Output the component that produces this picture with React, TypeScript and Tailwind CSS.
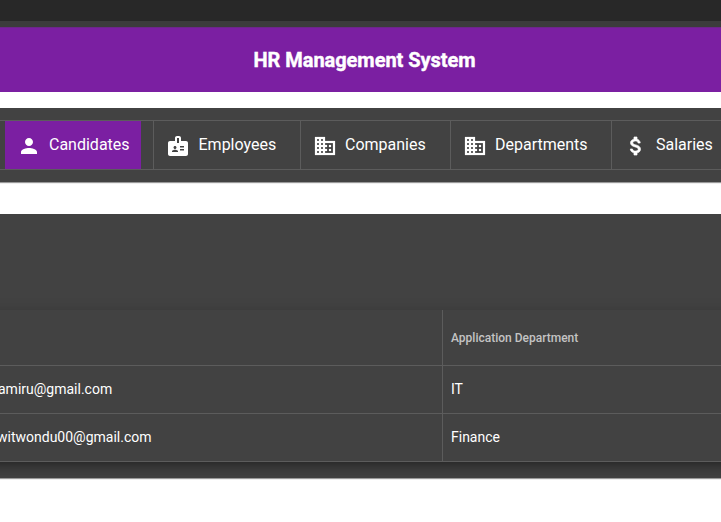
import type { ReactNode } from "react";
import { MdPerson, MdBadge } from "react-icons/md";

function BuildingIcon() {
  return (
    <svg width="24" height="24" viewBox="0 0 24 24" fill="currentColor" stroke="currentColor" strokeWidth="0.2">
      <path d="M12 7V3H2v18h20V7H12zM6 19H4v-2h2v2zm0-4H4v-2h2v2zm0-4H4V9h2v2zm0-4H4V5h2v2zm4 12H8v-2h2v2zm0-4H8v-2h2v2zm0-4H8V9h2v2zm0-4H8V5h2v2zm10 12h-8v-2h2v-2h-2v-2h2v-2h-2V9h8v10zm-2-8h-2v2h2v-2zm0 4h-2v2h2v-2z" />
    </svg>
  );
}

function DollarIcon() {
  return (
    <svg width="24" height="24" viewBox="0 0 24 24" fill="currentColor" stroke="currentColor" strokeWidth="0.7">
      <path d="M11.8 10.9c-2.27-.59-3-1.2-3-2.15 0-1.09 1.01-1.85 2.7-1.85 1.78 0 2.44.85 2.5 2.1h2.21c-.07-1.72-1.12-3.3-3.21-3.81V3h-3v2.16c-1.94.42-3.5 1.68-3.5 3.61 0 2.31 1.91 3.46 4.7 4.13 2.5.6 3 1.48 3 2.41 0 .69-.49 1.79-2.7 1.79-2.06 0-2.87-.92-2.98-2.1h-2.2c.12 2.19 1.76 3.42 3.68 3.83V21h3v-2.15c1.95-.37 3.5-1.5 3.5-3.55 0-2.84-2.43-3.81-4.7-4.4z" />
    </svg>
  );
}

function NavCell({ width, icon, label }: { width: string; icon: ReactNode; label: string }) {
  return (
    <div className={`${width} flex h-12 shrink-0 items-center border-r border-[#5c5c5c] pl-3 text-base text-white`}>
      <span className="flex pt-0.5">{icon}</span>
      <span className="whitespace-nowrap pl-2">{label}</span>
    </div>
  );
}

function Row({ email, department, emailShift }: { email: string; department: string; emailShift: string }) {
  return (
    <div className="flex h-12 border-b border-[#5c5c5c] text-sm text-white">
      <div className="flex w-[463px] shrink-0 items-center border-r border-[#5c5c5c] pb-px">
        <span className={`${emailShift} whitespace-nowrap`}>{email}</span>
      </div>
      <div className="flex items-center pb-px pl-2">{department}</div>
    </div>
  );
}

export default function App() {
  return (
    <div className="h-[522px] w-[721px] overflow-hidden bg-white font-['Roboto',sans-serif]">
      <div className="h-[21px] bg-[#282828]" />
      <div className="h-[6px] bg-[#3c3c3c]" />
      <header className="flex h-[65px] items-center justify-center border-t border-[#6c2789] bg-[#7b1fa2] pl-2">
        <h1 className="text-xl font-bold tracking-[-0.05px] whitespace-nowrap text-white [-webkit-text-stroke:0.4px_white]">HR Management System</h1>
      </header>

      <nav className="mt-4 h-[74px] bg-[#424242] pt-3 shadow-[0_1px_1px_rgba(0,0,0,0.4)]">
        <div className="flex h-[50px] border-y border-[#5c5c5c]">
          <div className="flex w-[154px] shrink-0 border-r border-[#5c5c5c] pl-[5px]">
            <div className="flex h-12 w-[136px] items-center gap-2 bg-[#7b1fa2] pl-3 text-base text-white">
              <span className="flex pt-0.5"><MdPerson size={24} /></span>
              <span>Candidates</span>
            </div>
          </div>
          <NavCell width="w-[147px]" icon={<MdBadge size={24} className="mr-[0.5px]" />} label="Employees" />
          <NavCell width="w-[150px]" icon={<BuildingIcon />} label="Companies" />
          <NavCell width="w-[161px]" icon={<BuildingIcon />} label="Departments" />
          <NavCell width="w-[160px]" icon={<DollarIcon />} label="Salaries" />
        </div>
      </nav>

      <main className="mt-8 h-[264px] bg-[#424242] pt-24 shadow-[0_1px_1px_rgba(0,0,0,0.4)]">
        <div className="h-[168px] [clip-path:inset(-20px_0_0_0)]">
          <div className="-mx-5 bg-[#424242] shadow-[0_5px_5px_-3px_rgba(0,0,0,0.2),0_8px_10px_1px_rgba(0,0,0,0.14),0_3px_14px_2px_rgba(0,0,0,0.12)]">
            <div className="flex h-14 border-b border-[#5c5c5c]">
              <div className="w-[463px] shrink-0 border-r border-[#5c5c5c]" />
              <div className="flex items-center pl-2 text-xs font-medium text-[#c4c4c4]">Application Department</div>
            </div>
            <Row email="amiru@gmail.com" department="IT" emailShift="pl-[18px]" />
            <Row email="witwondu00@gmail.com" department="Finance" emailShift="pl-[17px]" />
          </div>
        </div>
      </main>
    </div>
  );
}
